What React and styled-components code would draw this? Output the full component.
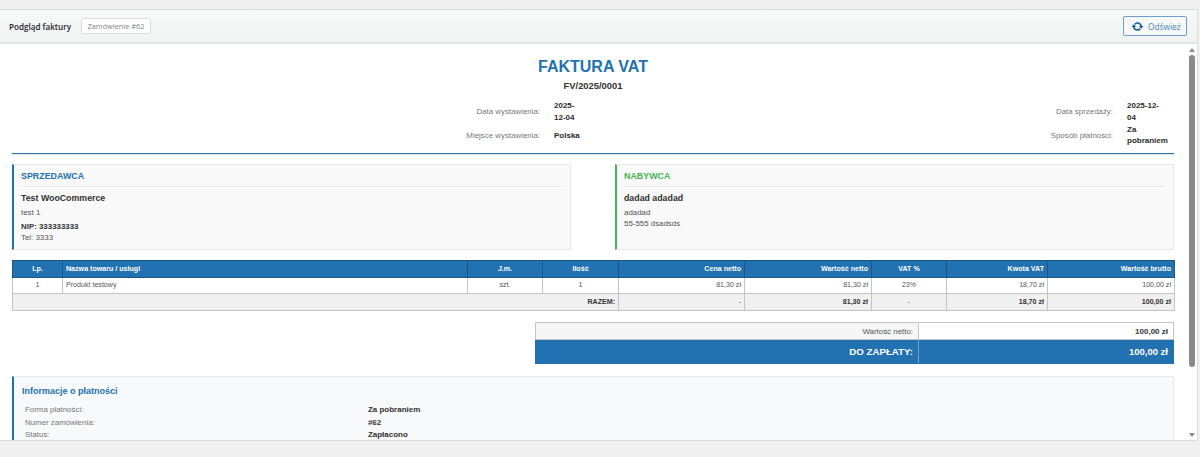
import React from "react"
import styled, { createGlobalStyle } from "styled-components"

const GlobalStyle = createGlobalStyle`
  html, body {
    margin: 0;
    height: 100%;
    overflow: hidden;
    background: #f0f0f1;
  }
`

const Page = styled.div`
  height: 457px;
  padding-top: 9px;
  box-sizing: border-box;
`

const Panel = styled.div`
  width: 1198px;
  height: 432px;
  box-sizing: border-box;
  display: flex;
  flex-direction: column;
  background: #fff;
  border: 1px solid #dcdcde;
  border-left: 0;
  border-radius: 0 2px 2px 0;
`

const Toolbar = styled.div`
  flex: none;
  height: 34px;
  box-sizing: border-box;
  display: flex;
  align-items: center;
  gap: 10px;
  padding: 0 10px 0 9px;
  background: linear-gradient(#f7f8f8, #f1f2f2);
  border-bottom: 2px solid #e2e3e4;
`

const ToolbarTitle = styled.span`
  font: 600 8.1px "Open Sans", sans-serif;
  color: #23282d;
`

const OrderBadge = styled.span`
  height: 16px;
  box-sizing: border-box;
  display: flex;
  align-items: center;
  padding: 0 5.5px;
  background: #fff;
  border: 1px solid #dcdcde;
  border-radius: 2px;
  font: 7.4px "Open Sans", sans-serif;
  color: #808488;
`

const RefreshButton = styled.button`
  margin-left: auto;
  width: 64px;
  height: 20px;
  box-sizing: border-box;
  display: flex;
  align-items: center;
  gap: 4px;
  padding: 0 0 0 7px;
  background: #f6f7f7;
  border: 1px solid #6c9fcb;
  border-radius: 2px;
  font: 8.3px "Open Sans", sans-serif;
  color: #3f85bd;
`

const Body = styled.div`
  flex: 1;
  min-height: 0;
  display: flex;
`

const Scroller = styled.div`
  flex: 1;
  min-width: 0;
  overflow: hidden;
`

const ScrollRail = styled.div`
  flex: none;
  width: 11px;
  box-sizing: border-box;
  display: flex;
  flex-direction: column;
  align-items: center;
  padding-left: 1px;
`

const RailArrow = styled.div`
  flex: none;
  height: 11px;
  display: flex;
  align-items: center;
  justify-content: center;
  margin-top: ${(p) => (p.$down ? "auto" : 0)};
  &::before {
    content: "";
    border-left: 3.5px solid transparent;
    border-right: 3.5px solid transparent;
    border-${(p) => (p.$down ? "top" : "bottom")}: 4px solid #8b8b8b;
  }
`

const RailThumb = styled.div`
  flex: none;
  width: 6px;
  height: 312px;
  background: #8b8b8b;
  border-radius: 3px;
`

const Invoice = styled.div`
  box-sizing: border-box;
  width: 1186px;
  height: 478px;
  padding: 14px 12px 0;
  font-family: "Liberation Sans", Arial, sans-serif;
  color: #333;
`

const InvoiceHeader = styled.header`
  border-bottom: 1px solid #2f76b5;
  box-shadow: 0 1px 0 #dbe7f2;
  padding-bottom: 5.5px;
`

const Title = styled.h1`
  margin: 0;
  font-size: 16px;
  line-height: 18px;
  font-weight: 700;
  text-align: center;
  color: #2271b1;
`

const Number = styled.div`
  margin-top: 4px;
  font-size: 9.4px;
  line-height: 11px;
  font-weight: 700;
  text-align: center;
`

const MetaGrid = styled.div`
  margin-top: 9px;
  display: grid;
  grid-template-columns: 528px 30px 1fr 40px;
  grid-auto-rows: 23.5px;
  column-gap: 14px;
  padding-right: 7px;
  align-items: center;
`

const MetaLabel = styled.div`
  font-size: 7.9px;
  color: #777;
  text-align: right;
`

const MetaValue = styled.div`
  font-size: 8px;
  line-height: 11.5px;
  font-weight: 700;
  color: #2b2b2b;
`

const Parties = styled.div`
  margin-top: 10px;
  display: grid;
  grid-template-columns: 559px 559px;
  justify-content: space-between;
`

const PartyBox = styled.section`
  height: 86px;
  box-sizing: border-box;
  padding: 5px 7px 0 7px;
  background: #f9f9f9;
  border: 1px solid #e8e8e8;
  border-left: 2px solid ${(p) => p.$accent};
`

const PartyHeading = styled.h2`
  margin: 0 0 6px;
  padding-bottom: 4px;
  border-bottom: 1px solid #ececec;
  font-size: 8.9px;
  line-height: 12px;
  font-weight: 700;
  color: ${(p) => p.$accent};
`

const PartyName = styled.div`
  margin-bottom: 3px;
  font-size: 8.8px;
  line-height: 11px;
  font-weight: 700;
`

const PartyLine = styled.div`
  font-size: 7.9px;
  line-height: 11.4px;
  color: #555;
  margin-bottom: ${(p) => p.$gap || 0}px;
`

const PartyTax = styled.div`
  font-size: 7.9px;
  line-height: 11.4px;
  font-weight: 700;
`

const ItemsTable = styled.table`
  margin-top: 10px;
  width: 100%;
  table-layout: fixed;
  border-collapse: collapse;
  font-size: 7.1px;
`

const Head = styled.th`
  height: 17px;
  padding: 0 3px;
  box-sizing: border-box;
  background: #2271b1;
  border: 1px solid #1c5684;
  color: #fff;
  font-weight: 700;
  text-align: ${(p) => p.$align || "center"};
`

const Cell = styled.td`
  height: 16.5px;
  padding: 0 3px;
  box-sizing: border-box;
  border: 1px solid #c3c4c7;
  color: #555;
  text-align: ${(p) => p.$align || "center"};
`

const TotalCell = styled(Cell)`
  height: 17px;
  background: #f0f0f0;
  color: ${(p) => (p.$plain ? "#555" : "#333")};
  font-weight: ${(p) => (p.$plain ? 400 : 700)};
`

const Summary = styled.table`
  margin: 11px 0 0 auto;
  width: 639px;
  table-layout: fixed;
  border-collapse: collapse;
`

const SummaryLabel = styled.td`
  width: 383px;
  height: 17px;
  padding: 0 5px;
  box-sizing: border-box;
  background: #f5f5f5;
  border: 1px solid #c3c4c7;
  font-size: 7.9px;
  color: #555;
  text-align: right;
`

const SummaryValue = styled.td`
  padding: 0 5px;
  box-sizing: border-box;
  border: 1px solid #c3c4c7;
  font-size: 8px;
  font-weight: 700;
  text-align: right;
`

const DueLabel = styled(SummaryLabel)`
  height: 24px;
  background: #2271b1;
  border-color: #2271b1 #7f9fbb #2271b1 #2271b1;
  font-size: 9.7px;
  font-weight: 700;
  color: #fff;
`

const DueValue = styled(SummaryValue)`
  background: #2271b1;
  border-color: #2271b1;
  font-size: 9.5px;
  color: #fff;
`

const PaymentBox = styled.section`
  margin-top: 12px;
  box-sizing: border-box;
  padding: 8px;
  background: #f8f9fa;
  border: 1px solid #e8e8e8;
  border-left: 2px solid #2271b1;
`

const PaymentTitle = styled.h3`
  margin: 0 0 6px;
  font-size: 9px;
  line-height: 12px;
  font-weight: 700;
  color: #2271b1;
`

const PaymentGrid = styled.div`
  display: grid;
  grid-template-columns: 30% 1fr;
  grid-auto-rows: 12.8px;
  align-items: center;
`

const PaymentLabel = styled.div`
  padding-left: 3px;
  font-size: 7.9px;
  color: #777;
`

const PaymentValue = styled.div`
  padding-left: 3px;
  font-size: 8px;
  font-weight: 700;
  color: #333;
`

const Col = styled.col`
  width: ${(p) => p.$w}px;
`

const UpdateIcon = () => (
  <svg width="13" height="13" viewBox="0 0 20 20" fill="#135e96">
    <path d="M10.2 3.28c3.53 0 6.43 2.61 6.92 6h2.08l-3.5 4-3.5-4h2.32c-.45-1.97-2.21-3.45-4.32-3.45-1.45 0-2.73.71-3.54 1.78L4.95 5.66C6.23 4.2 8.11 3.28 10.2 3.28zm-.4 13.44c-3.52 0-6.43-2.61-6.92-6H.8l3.5-4c1.17 1.33 2.33 2.67 3.5 4H5.48c.45 1.97 2.21 3.45 4.32 3.45 1.45 0 2.73-.71 3.54-1.78l1.71 1.95c-1.28 1.46-3.15 2.38-5.25 2.38z" />
  </svg>
)

const columns = [50, 405, 75, 76, 126, 127, 75, 101, 127]

const App = () => {
  return (
    <Page>
      <GlobalStyle />
      <Panel>
        <Toolbar>
          <ToolbarTitle>Podgląd faktury</ToolbarTitle>
          <OrderBadge>Zamówienie #62</OrderBadge>
          <RefreshButton>
            <UpdateIcon />
            Odśwież
          </RefreshButton>
        </Toolbar>
        <Body>
          <Scroller>
            <Invoice>
              <InvoiceHeader>
                <Title>FAKTURA VAT</Title>
                <Number>FV/2025/0001</Number>
                <MetaGrid>
                  <MetaLabel>Data wystawienia:</MetaLabel>
                  <MetaValue>2025-12-04</MetaValue>
                  <MetaLabel>Data sprzedaży:</MetaLabel>
                  <MetaValue>2025-12-04</MetaValue>
                  <MetaLabel>Miejsce wystawienia:</MetaLabel>
                  <MetaValue>Polska</MetaValue>
                  <MetaLabel>Sposób płatności:</MetaLabel>
                  <MetaValue>Za pobraniem</MetaValue>
                </MetaGrid>
              </InvoiceHeader>

              <Parties>
                <PartyBox $accent="#2271b1">
                  <PartyHeading $accent="#2271b1">SPRZEDAWCA</PartyHeading>
                  <PartyName>Test WooCommerce</PartyName>
                  <PartyLine $gap={3}>test 1</PartyLine>
                  <PartyTax>NIP: 333333333</PartyTax>
                  <PartyLine>Tel: 3333</PartyLine>
                </PartyBox>
                <PartyBox $accent="#46b450">
                  <PartyHeading $accent="#46b450">NABYWCA</PartyHeading>
                  <PartyName>dadad adadad</PartyName>
                  <PartyLine>adadad</PartyLine>
                  <PartyLine>55-555 dsadsds</PartyLine>
                </PartyBox>
              </Parties>

              <ItemsTable>
                <colgroup>
                  {columns.map((w, i) => (
                    <Col key={i} $w={w} />
                  ))}
                </colgroup>
                <thead>
                  <tr>
                    <Head>Lp.</Head>
                    <Head $align="left">Nazwa towaru / usługi</Head>
                    <Head>J.m.</Head>
                    <Head>Ilość</Head>
                    <Head $align="right">Cena netto</Head>
                    <Head $align="right">Wartość netto</Head>
                    <Head>VAT %</Head>
                    <Head $align="right">Kwota VAT</Head>
                    <Head $align="right">Wartość brutto</Head>
                  </tr>
                </thead>
                <tbody>
                  <tr>
                    <Cell>1</Cell>
                    <Cell $align="left">Produkt testowy</Cell>
                    <Cell>szt.</Cell>
                    <Cell>1</Cell>
                    <Cell $align="right">81,30 zł</Cell>
                    <Cell $align="right">81,30 zł</Cell>
                    <Cell>23%</Cell>
                    <Cell $align="right">18,70 zł</Cell>
                    <Cell $align="right">100,00 zł</Cell>
                  </tr>
                  <tr>
                    <TotalCell colSpan={4} $align="right">RAZEM:</TotalCell>
                    <TotalCell $align="right" $plain>-</TotalCell>
                    <TotalCell $align="right">81,30 zł</TotalCell>
                    <TotalCell $plain>-</TotalCell>
                    <TotalCell $align="right">18,70 zł</TotalCell>
                    <TotalCell $align="right">100,00 zł</TotalCell>
                  </tr>
                </tbody>
              </ItemsTable>

              <Summary>
                <tbody>
                  <tr>
                    <SummaryLabel>Wartość netto:</SummaryLabel>
                    <SummaryValue>100,00 zł</SummaryValue>
                  </tr>
                  <tr>
                    <DueLabel>DO ZAPŁATY:</DueLabel>
                    <DueValue>100,00 zł</DueValue>
                  </tr>
                </tbody>
              </Summary>

              <PaymentBox>
                <PaymentTitle>Informacje o płatności</PaymentTitle>
                <PaymentGrid>
                  <PaymentLabel>Forma płatności:</PaymentLabel>
                  <PaymentValue>Za pobraniem</PaymentValue>
                  <PaymentLabel>Numer zamówienia:</PaymentLabel>
                  <PaymentValue>#62</PaymentValue>
                  <PaymentLabel>Status:</PaymentLabel>
                  <PaymentValue>Zapłacono</PaymentValue>
                </PaymentGrid>
              </PaymentBox>
            </Invoice>
          </Scroller>
          <ScrollRail>
            <RailArrow />
            <RailThumb />
            <RailArrow $down />
          </ScrollRail>
        </Body>
      </Panel>
    </Page>
  )
}

export default App
